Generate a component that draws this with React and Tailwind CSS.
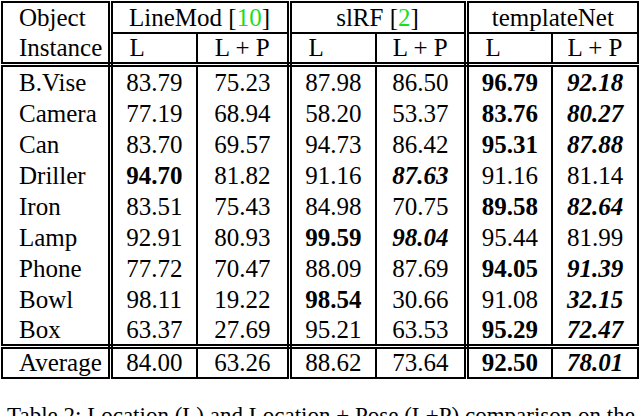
const rows = [
  ['B.Vise', '83.79', '75.23', '87.98', '86.50', '*96.79', '_92.18'],
  ['Camera', '77.19', '68.94', '58.20', '53.37', '*83.76', '_80.27'],
  ['Can', '83.70', '69.57', '94.73', '86.42', '*95.31', '_87.88'],
  ['Driller', '*94.70', '81.82', '91.16', '_87.63', '91.16', '81.14'],
  ['Iron', '83.51', '75.43', '84.98', '70.75', '*89.58', '_82.64'],
  ['Lamp', '92.91', '80.93', '*99.59', '_98.04', '95.44', '81.99'],
  ['Phone', '77.72', '70.47', '88.09', '87.69', '*94.05', '_91.39'],
  ['Bowl', '98.11', '19.22', '*98.54', '30.66', '91.08', '_32.15'],
  ['Box', '63.37', '27.69', '95.21', '63.53', '*95.29', '_72.47'],
]

const average = ['Average', '84.00', '63.26', '88.62', '73.64', '*92.50', '_78.01']

// right border of each column: double after Object, LineMod and slRF
const rightBorder = [
  'border-r-[5px]', 'border-r-2', 'border-r-[5px]', 'border-r-2', 'border-r-[5px]', 'border-r-2', 'border-r-2',
]

function Value({ v }) {
  if (v.startsWith('*')) return <span className="font-bold">{v.slice(1)}</span>
  if (v.startsWith('_')) return <span className="font-bold italic">{v.slice(1)}</span>
  return <span>{v}</span>
}

function Cite({ n }) {
  return <span>[<span className="text-[#19e019]">{n}</span>]</span>
}

export default function App() {
  return (
    <div className="w-[640px] h-[416px] overflow-hidden bg-white text-black [font-family:'Liberation_Serif',serif]">
      <table className="table-fixed border-collapse w-[637px] ml-px mt-px text-[25px] border-2 border-double border-black">
        <colgroup>
          <col className="w-[108px]" />
          <col className="w-[87px]" />
          <col className="w-[92px]" />
          <col className="w-[87px]" />
          <col className="w-[90px]" />
          <col className="w-[86px]" />
          <col className="w-[86px]" />
        </colgroup>
        <thead>
          <tr className="h-[31px]">
            <th className="font-normal text-left pl-4 leading-[28px] border-double border-black border-r-[5px]">Object</th>
            <th colSpan={2} className="font-normal leading-[28px] border-double border-black border-r-[5px] border-b-2">
              LineMod <Cite n="10" />
            </th>
            <th colSpan={2} className="font-normal leading-[28px] border-double border-black border-r-[5px] border-b-2">
              slRF <Cite n="2" />
            </th>
            <th colSpan={2} className="font-normal leading-[28px] border-double border-black border-b-2">
              templateNet
            </th>
          </tr>
          <tr className="h-[31px]">
            {['Instance', 'L', 'L + P', 'L', 'L + P', 'L', 'L + P'].map((h, i) => (
              <th key={i}
                className={`font-normal leading-[28px] border-double border-black border-b-[5px] ${rightBorder[i]} ${i === 0 ? 'text-left pl-4' : i % 2 === 1 ? 'text-left pl-[17px]' : 'text-center'}`}>
                {h}
              </th>
            ))}
          </tr>
        </thead>
        <tbody>
          {rows.map((r, ri) => (
            <tr key={r[0]} className={ri === 0 ? 'h-[33px]' : 'h-[31px]'}>
              {r.map((c, i) => (
                <td key={i}
                  className={`leading-[29px] border-double border-black ${rightBorder[i]} ${ri === rows.length - 1 ? 'border-b-[5px]' : ''} ${i === 0 ? 'text-left pl-4' : 'text-center'}`}>
                  <Value v={c} />
                </td>
              ))}
            </tr>
          ))}
          <tr className="h-[30px]">
            {average.map((c, i) => (
              <td key={i}
                className={`leading-[28px] border-double border-black ${rightBorder[i]} ${i === 0 ? 'text-left pl-4' : 'text-center'}`}>
                <Value v={c} />
              </td>
            ))}
          </tr>
        </tbody>
      </table>
      <p className="mt-[20px] pl-[7px] text-[23px] whitespace-nowrap">
        Table 2: Location (L) and Location + Pose (L+P) comparison on the
      </p>
    </div>
  )
}
